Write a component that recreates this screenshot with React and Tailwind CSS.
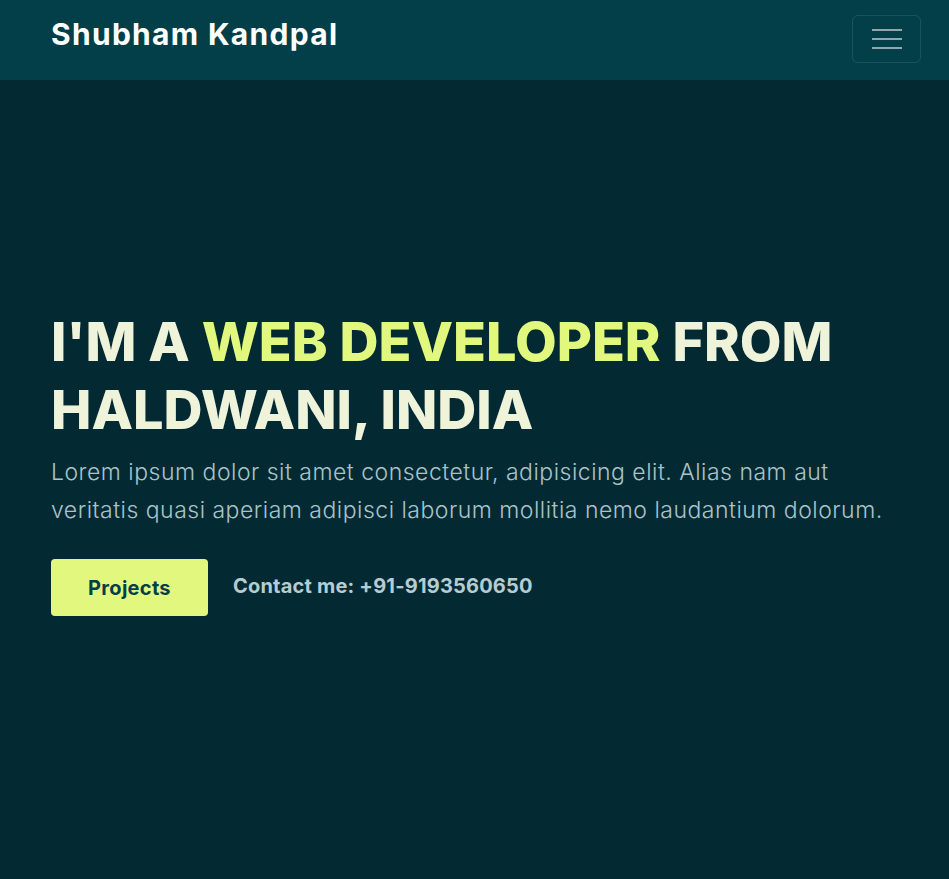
export default function App() {
  return (
    <div className="min-h-screen bg-[#032a33] font-['Inter','Noto_Sans',sans-serif]">
      {/* Navbar */}
      <header className="h-20 bg-[#033f48] flex items-center justify-between pl-[51px] pr-[28px]">
        <a href="#" className="text-[30px] font-bold text-white tracking-[1.3px] -mt-[12px]">
          Shubham Kandpal
        </a>
        <button className="flex h-12 w-[69px] flex-col items-center justify-center gap-[7px] rounded-md border border-white/10 -mt-[2px]">
          <span className="block h-[2px] w-[30px] bg-[#8fa8ad]" />
          <span className="block h-[2px] w-[30px] bg-[#8fa8ad]" />
          <span className="block h-[2px] w-[30px] bg-[#8fa8ad]" />
        </button>
      </header>

      {/* Hero */}
      <main className="px-[51px] pt-[228px] pb-[258px]">
        <h1 className="text-[54px] font-extrabold leading-[68px] text-[#eef3da] uppercase">
          I'M A <span className="text-[#e2f77e]">Web Developer</span> from Haldwani, India
        </h1>
        <p className="mt-[9px] text-[23px] leading-[38px] tracking-[0.5px] text-[#a9c3c9] font-light">
          Lorem ipsum dolor sit amet consectetur, adipisicing elit. Alias nam aut veritatis quasi aperiam adipisci laborum mollitia nemo laudantium dolorum.
        </p>
        <div className="mt-[30px] flex items-center gap-[25px]">
          <button className="h-[57px] w-[157px] rounded-[4px] bg-[#e2f77e] text-[20px] font-bold text-[#033f48] tracking-[0.3px]">
            Projects
          </button>
          <span className="text-[20px] font-bold text-[#b6ccd1] -mt-[4px] tracking-[0.2px]">
            Contact me: +91-9193560650
          </span>
        </div>
      </main>
    </div>
  );
}
